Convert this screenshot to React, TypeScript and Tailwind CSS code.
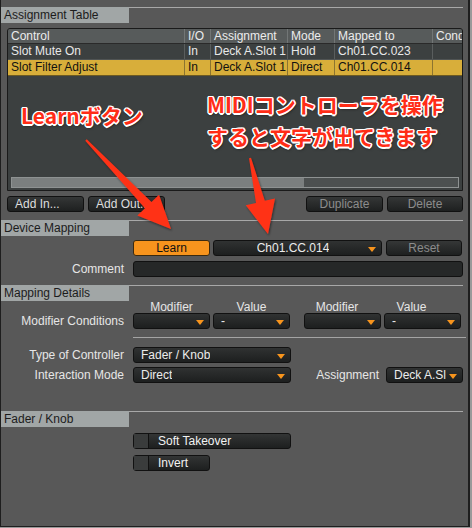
import React from "react";

const font = "font-['Liberation_Sans',Arial,sans-serif]";

type Pt = [number, number];

function arrowPoints(tail: Pt, tip: Pt, headLen = 32, headHalf = 15, w0 = 1, w1 = 4.5) {
  const dx = tip[0] - tail[0];
  const dy = tip[1] - tail[1];
  const len = Math.hypot(dx, dy);
  const d: Pt = [dx / len, dy / len];
  const n: Pt = [-d[1], d[0]];
  const b: Pt = [tip[0] - d[0] * headLen, tip[1] - d[1] * headLen];
  const p = (o: Pt, k: number): string => `${o[0] + n[0] * k},${o[1] + n[1] * k}`;
  return [p(tail, w0), p(b, w1), p(b, headHalf), `${tip[0]},${tip[1]}`, p(b, -headHalf), p(b, -w1), p(tail, -w0)].join(" ");
}

function SectionHeader({ title }: { title: string }) {
  return (
    <div className="flex h-[16px]">
      <div className="w-[128px] bg-[#a1a6a6] pl-[3px] text-[12px] leading-[16px] text-[#1c1c1c]">{title}</div>
      <div className="flex-1 border-t border-[#a8a8a8]" />
    </div>
  );
}

function Btn({ text, className, dim, left }: { text: string; className: string; dim?: boolean; left?: boolean }) {
  return (
    <div
      className={`flex h-[16px] items-center rounded-[3px] border border-[#111] bg-gradient-to-b from-[#353737] to-[#1e2020] text-[12px] leading-[14px] ${
        left ? "justify-start pl-[7px]" : "justify-center"
      } ${dim ? "text-[#8c8c8c]" : "text-[#dedede]"} ${className}`}
    >
      {text}
    </div>
  );
}

function Drop({ text, className, center }: { text?: string; className: string; center?: boolean }) {
  return (
    <div
      className={`relative flex h-[16px] items-center rounded-[3px] border border-[#111] bg-gradient-to-b from-[#303232] to-[#1d1f1f] pl-[7px] pr-[16px] text-[12px] leading-[14px] text-[#ececec] ${
        center ? "justify-center" : ""
      } ${className}`}
    >
      <span className="overflow-hidden whitespace-nowrap">{text}</span>
      <span className="absolute right-[5px] top-[6px] h-0 w-0 border-l-[4px] border-r-[4px] border-t-[5px] border-l-transparent border-r-transparent border-t-[#f7941d]" />
    </div>
  );
}

function Check({ text, className }: { text: string; className: string }) {
  return (
    <div className={`flex h-[16px] rounded-[3px] border border-[#111] bg-gradient-to-b from-[#333535] to-[#1d1f1f] text-[12px] text-[#f2f2f2] ${className}`}>
      <div className="w-[15px] border-r border-[#111] bg-[#3a3c3c]" />
      <div className="pl-[9px] leading-[14px]">{text}</div>
    </div>
  );
}

function Label({ text }: { text: string }) {
  return <div className="w-[124px] pr-[1px] text-right text-[12px] leading-[16px] text-[#e6e6e6]">{text}</div>;
}

const cols = "grid grid-cols-[177px_26px_77px_47px_98px_1fr]";

function Row({ cells, sel }: { cells: string[]; sel?: boolean }) {
  return (
    <div className={`${cols} h-[16px] border-b ${sel ? "border-[#6d5a22] bg-[#d8ae3a] text-[#111]" : "border-[#505454] bg-[#3c4040] text-[#e8e8e8]"}`}>
      {cells.map((c, i) => (
        <div key={i} className={`overflow-hidden whitespace-nowrap pl-[3px] leading-[15px] ${i < 5 ? (sel ? "border-r border-[#8c7430]" : "border-r border-[#5a5e5e]") : ""}`}>
          {c}
        </div>
      ))}
    </div>
  );
}

export default function App() {
  const jp =
    "absolute whitespace-nowrap font-['Noto_Sans_CJK_JP',sans-serif] text-[21px] font-bold leading-none text-[#ff2d17] [text-shadow:1.5px_0_0_#fff,-1.5px_0_0_#fff,0_1.5px_0_#fff,0_-1.5px_0_#fff,1px_1px_0_#fff,-1px_-1px_0_#fff,1px_-1px_0_#fff,-1px_1px_0_#fff,1px_2px_3px_rgba(0,0,0,0.6)]";
  return (
    <div className={`relative h-[528px] w-[472px] overflow-hidden bg-[#9a9a9a] ${font}`}>
      <div className="flex h-[527px] w-[470px] flex-col border-b border-l border-r-2 border-[#1e1e1e] bg-[#585858] pl-0 pr-[5px] pt-[7px]">
        <SectionHeader title="Assignment Table" />

        <div className="ml-[6px] mt-[5px] flex h-[163px] flex-col overflow-hidden rounded-t-[3px] border border-[#1a1a1a] bg-[#3c4040] text-[12px]">
          <div className={`${cols} h-[15px] border-b border-[#2a2a2a] bg-[#575b5b] text-[#ececec]`}>
            {["Control", "I/O", "Assignment", "Mode", "Mapped to", "Cond"].map((c, i) => (
              <div key={c} className={`overflow-hidden whitespace-nowrap pl-[3px] leading-[15px] ${i < 5 ? "border-r border-[#727676]" : ""}`}>
                {c}
              </div>
            ))}
          </div>
          <Row cells={["Slot Mute On", "In", "Deck A.Slot 1", "Hold", "Ch01.CC.023", ""]} />
          <Row sel cells={["Slot Filter Adjust", "In", "Deck A.Slot 1", "Direct", "Ch01.CC.014", ""]} />
          <div className="flex-1" />
          <div className="mx-[3px] mb-[2px] flex h-[11px] border border-[#8e9292] bg-[#4c5050]">
            <div className="w-[292px] bg-[#7b7f7f]" />
          </div>
        </div>

        <div className="ml-[6px] mt-[5px] flex">
          <Btn left text="Add In..." className="w-[77px]" />
          <Btn left text="Add Out..." className="ml-[4px] w-[77px]" />
          <div className="flex-1" />
          <Btn dim text="Duplicate" className="w-[77px]" />
          <Btn dim text="Delete" className="ml-[4px] w-[76px]" />
        </div>

        <div className="mt-[8px]">
          <SectionHeader title="Device Mapping" />
        </div>
        <div className="mt-[4px] flex items-center gap-[8px]">
          <div className="w-[124px]" />
          <div className="flex h-[16px] w-[77px] items-center justify-center rounded-[3px] border border-[#3a2a10] bg-[#f7941d] text-[12px] leading-[14px] text-[#111]">Learn</div>
          <Drop center text="Ch01.CC.014" className="-ml-[5px] w-[169px]" />
          <Btn dim text="Reset" className="ml-[-4px] w-[76px]" />
        </div>
        <div className="mt-[5px] flex items-center gap-[8px]">
          <Label text="Comment" />
          <div className="h-[16px] flex-1 rounded-[3px] border border-[#111] bg-[#262828]" />
        </div>

        <div className="mt-[8px]">
          <SectionHeader title="Mapping Details" />
        </div>
        <div className="flex h-[12px] gap-[8px] text-[12px] leading-[12px] text-[#e6e6e6]">
          <div className="w-[124px]" />
          <div className="grid flex-1 grid-cols-[77px_77px_77px_77px] gap-x-[3px] [&>div:nth-child(3)]:ml-[11px]">
            <div className="text-center">Modifier</div>
            <div className="text-center">Value</div>
            <div className="text-center">Modifier</div>
            <div className="text-center">Value</div>
          </div>
        </div>
        <div className="flex items-center gap-[8px]">
          <Label text="Modifier Conditions" />
          <Drop className="w-[77px]" />
          <Drop text="-" className="-ml-[5px] w-[77px]" />
          <Drop className="ml-[6px] w-[77px]" />
          <Drop text="-" className="-ml-[5px] w-[77px]" />
        </div>
        <div className="ml-[132px] mr-[-3px] mt-[8px] h-px bg-[#a4a4a4]" />
        <div className="mt-[9px] flex items-center gap-[8px]">
          <Label text="Type of Controller" />
          <Drop text="Fader / Knob" className="w-[158px]" />
        </div>
        <div className="mt-[4px] flex items-center gap-[8px]">
          <Label text="Interaction Mode" />
          <Drop text="Direct" className="w-[158px]" />
          <div className="flex-1 text-right text-[12px] leading-[16px] text-[#e6e6e6]">Assignment</div>
          <Drop text="Deck A.Slot 1" className="-ml-[1px] w-[77px]" />
        </div>

        <div className="mt-[28px]">
          <SectionHeader title="Fader / Knob" />
        </div>
        <div className="mt-[6px] flex gap-[8px]">
          <div className="w-[124px]" />
          <Check text="Soft Takeover" className="w-[158px]" />
        </div>
        <div className="mt-[6px] flex gap-[8px]">
          <div className="w-[124px]" />
          <Check text="Invert" className="w-[77px]" />
        </div>
      </div>

      <svg className="pointer-events-none absolute left-0 top-0" width="472" height="528">
        <defs>
          <filter id="sh" x="-20%" y="-20%" width="140%" height="140%">
            <feDropShadow dx="1" dy="1.5" stdDeviation="1" floodColor="#000" floodOpacity="0.45" />
          </filter>
        </defs>
        <polygon points={arrowPoints([86, 140], [171, 229], 33, 15)} fill="#ff3219" filter="url(#sh)" />
        <polygon points={arrowPoints([250, 158], [268, 234], 33, 15)} fill="#ff3219" filter="url(#sh)" />
      </svg>

      <div className={`${jp} left-[21px] top-[105px]`}>Learnボタン</div>
      <div className={`${jp} left-[207px] top-[94px]`}>MIDIコントローラを操作</div>
      <div className={`${jp} left-[207px] top-[126px]`}>すると文字が出てきます</div>
    </div>
  );
}
